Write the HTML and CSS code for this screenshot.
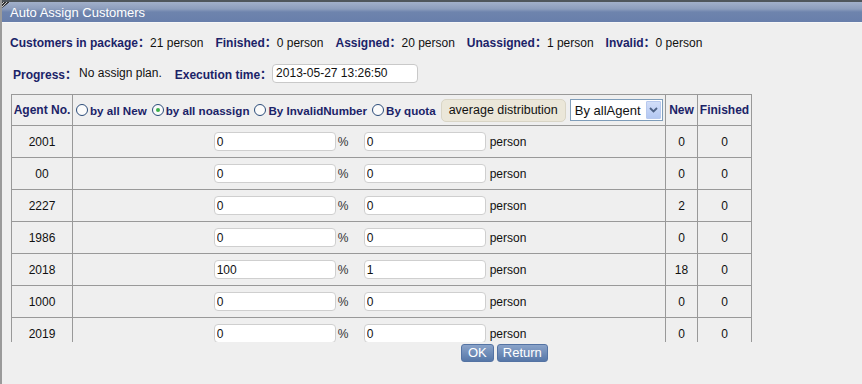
FILE: index.html
```html
<!DOCTYPE html>
<html>
<head>
<meta charset="utf-8">
<link rel="stylesheet" href="styles.css">
</head>
<body>
<div class="window">
  <div class="titlebar"><span class="grip"></span><span class="title">Auto Assign Customers</span></div>
  <div class="content">
    <div class="stats">
      <span class="grp"><b>Customers in package：</b>21 person</span>
      <span class="grp"><b>Finished：</b>0 person</span>
      <span class="grp"><b>Assigned：</b>20 person</span>
      <span class="grp"><b>Unassigned：</b>1 person</span>
      <span class="grp"><b>Invalid：</b>0 person</span>
    </div>
    <div class="progress">
      <b>Progress：</b><span class="pval">No assign plan.</span>
      <b>Execution time：</b><input class="time" type="text" value="2013-05-27 13:26:50">
    </div>
    <div class="scroller">
      <table class="grid">
        <colgroup><col class="c1"><col class="c2"><col class="c3"><col class="c4"></colgroup>
        <thead>
          <tr>
            <th>Agent No.</th>
            <th class="optcell">
              <div class="opts">
                <span class="radio"></span><span class="lbl">by all New</span>
                <span class="radio on"></span><span class="lbl">by all noassign</span>
                <span class="radio"></span><span class="lbl">By InvalidNumber</span>
                <span class="radio"></span><span class="lbl">By quota</span>
                <span class="avg">average distribution</span>
                <span class="select"><span class="stext">By allAgent</span><span class="sarrow"><svg width="9" height="6" viewBox="0 0 9 6"><path d="M1 1 L4.5 4.5 L8 1" fill="none" stroke="#4d6185" stroke-width="1.8"/></svg></span></span>
              </div>
            </th>
            <th>New</th>
            <th>Finished</th>
          </tr>
        </thead>
        <tbody>
          <tr><td>2001</td><td class="mid"><input class="f" value="0"><span class="pct">%</span><input class="f" value="0"><span class="per">person</span></td><td>0</td><td>0</td></tr>
          <tr><td>00</td><td class="mid"><input class="f" value="0"><span class="pct">%</span><input class="f" value="0"><span class="per">person</span></td><td>0</td><td>0</td></tr>
          <tr><td>2227</td><td class="mid"><input class="f" value="0"><span class="pct">%</span><input class="f" value="0"><span class="per">person</span></td><td>2</td><td>0</td></tr>
          <tr><td>1986</td><td class="mid"><input class="f" value="0"><span class="pct">%</span><input class="f" value="0"><span class="per">person</span></td><td>0</td><td>0</td></tr>
          <tr><td>2018</td><td class="mid"><input class="f" value="100"><span class="pct">%</span><input class="f" value="1"><span class="per">person</span></td><td>18</td><td>0</td></tr>
          <tr><td>1000</td><td class="mid"><input class="f" value="0"><span class="pct">%</span><input class="f" value="0"><span class="per">person</span></td><td>0</td><td>0</td></tr>
          <tr><td>2019</td><td class="mid"><input class="f" value="0"><span class="pct">%</span><input class="f" value="0"><span class="per">person</span></td><td>0</td><td>0</td></tr>
        </tbody>
      </table>
    </div>
    <div class="actions">
      <button class="btn ok">OK</button><button class="btn">Return</button>
    </div>
  </div>
</div>
</body>
</html>
```
FILE: styles.css
```css
html, body {
  margin: 0;
  padding: 0;
  background: #efefef;
  font-family: "Liberation Sans", Arial, "Noto Sans CJK SC", sans-serif;
  font-size: 12px;
  color: #111;
}
.window {
  width: 862px;
  height: 384px;
  overflow: hidden;
  border-left: 2px solid #9a9a9a;
  box-sizing: border-box;
}
.titlebar {
  height: 20px;
  border-top: 2px solid #4f565c;
  background: linear-gradient(#a2b0ca 0%, #8c9dbd 35%, #6e84ad 50%, #687fab 100%);
  border-bottom: 1px solid #f7f7f7;
  position: relative;
  display: flex;
  align-items: center;
}
.grip {
  position: absolute;
  left: 0;
  top: 0;
  width: 8px;
  height: 6px;
  background: repeating-linear-gradient(135deg, #333 0 1px, #ccc 1px 2px);
  clip-path: polygon(0 0, 100% 0, 0 100%);
}
.title {
  color: #fff;
  font-size: 13px;
  padding-left: 8px;
}
.content {
  background: #efefef;
}
.stats {
  height: 20px;
  margin-top: 8px;
  padding-left: 8px;
  display: flex;
  align-items: center;
  white-space: nowrap;
}
.grp {
  margin-right: 12px;
}
b {
  color: #1b2368;
  font-weight: bold;
}
.progress {
  margin-top: 11px;
  padding-left: 11px;
  display: flex;
  align-items: center;
  white-space: nowrap;
  height: 22px;
}
.pval {
  margin-left: 2px;
  margin-right: 13px;
}
.time {
  width: 146px;
  height: 19px;
  box-sizing: border-box;
  margin-left: 0;
  border: 1px solid #c9c9c9;
  border-radius: 4px;
  background: #fff;
  font: 12px "Liberation Sans", Arial, sans-serif;
  padding: 0 3px;
  color: #111;
}
.scroller {
  margin-top: 10px;
  margin-left: 9px;
  width: 742px;
  height: 248px;
  overflow: hidden;
}
.grid {
  border-collapse: collapse;
  table-layout: fixed;
  width: 741px;
}
.c1 { width: 61px; }
.c2 { width: 593px; }
.c3 { width: 32px; }
.c4 { width: 54px; }
.grid th, .grid td {
  border: 1px solid #999;
  text-align: center;
  padding: 0;
  white-space: nowrap;
}
.grid th {
  height: 30px;
  color: #1b2368;
  font-weight: bold;
}
.grid td {
  height: 31px;
}
.optcell {
  overflow: hidden;
}
.opts {
  display: flex;
  align-items: center;
  padding-left: 3px;
  white-space: nowrap;
}
.radio {
  flex: none;
  display: inline-block;
  width: 12px;
  height: 12px;
  border: 1px solid #2b4c7a;
  border-radius: 50%;
  background: #fbfbfb;
  margin-right: 2px;
  position: relative;
  box-sizing: border-box;
}
.radio.on::after {
  content: "";
  position: absolute;
  left: 3px;
  top: 3px;
  width: 4px;
  height: 4px;
  border-radius: 50%;
  background: #3cb04a;
}
.lbl {
  margin-right: 5px;
  font-size: 11.6px;
}
.avg {
  display: inline-block;
  height: 21px;
  line-height: 21px;
  padding: 0 7px;
  margin-left: 0;
  background: #ebe7d9;
  border: 1px solid #d9d5c6;
  border-radius: 5px;
  color: #111;
  font-weight: normal;
  font-size: 12.5px;
}
.select {
  display: inline-flex;
  align-items: center;
  justify-content: space-between;
  width: 93px;
  height: 22px;
  box-sizing: border-box;
  margin-left: 4px;
  border: 1px solid #7f9db9;
  background: #fff;
  color: #111;
  font-weight: normal;
  font-size: 13px;
  padding: 1px;
}
.stext {
  padding-left: 3px;
}
.sarrow {
  display: inline-flex;
  align-items: center;
  justify-content: center;
  width: 15px;
  height: 18px;
  background: linear-gradient(#d2def8, #b4c8f2);
  border: 1px solid #b8c9ee;
  box-sizing: border-box;
  border-radius: 1px;
}
.mid {
  padding-left: 2px !important;
}
.f {
  width: 122px;
  height: 19px;
  box-sizing: border-box;
  border: 1px solid #cfcfcf;
  border-radius: 4px;
  background: #fff;
  font: 12px "Liberation Sans", Arial, sans-serif;
  padding: 0 2px;
  color: #111;
  vertical-align: middle;
}
.pct {
  display: inline-block;
  width: 28px;
  text-align: left;
  padding-left: 2px;
  box-sizing: border-box;
  color: #333;
  vertical-align: middle;
}
.per {
  display: inline-block;
  padding-left: 4px;
  vertical-align: middle;
}
.actions {
  display: flex;
  gap: 3px;
  padding-left: 459px;
  margin-top: 2px;
}
.btn {
  height: 18px;
  padding: 0 5px;
  border: 1px solid #5473a3;
  border-radius: 3px;
  background: linear-gradient(#8aa3c9, #5677a8);
  color: #fff;
  font: 13px "Liberation Sans", Arial, sans-serif;
  line-height: 16px;
}
.btn.ok {
  padding: 0 6px;
}
```
